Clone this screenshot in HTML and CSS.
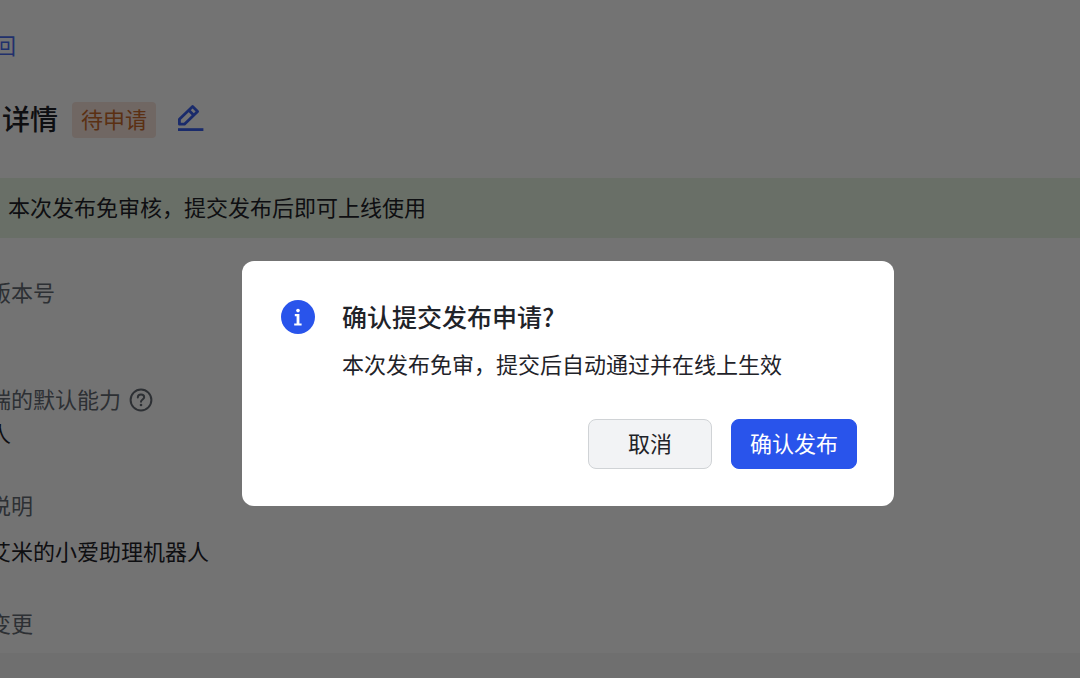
FILE: index.html
```html
<!DOCTYPE html>
<html lang="zh-CN">
<head>
    <meta charset="UTF-8">
    <meta name="viewport" content="width=device-width, initial-scale=1.0">
    <title>版本详情</title>
    <link rel="stylesheet" href="styles.css">
</head>
<body>

    <main class="page">
        <a class="back-link" href="#">回</a>

        <div class="page-header">
            <h1>详情</h1>
            <span class="tag">待申请</span>
            <button class="edit-btn" type="button" aria-label="编辑">
                <svg width="28" height="32" viewBox="0 0 28 32" fill="none" stroke="currentColor" stroke-width="2.8" stroke-linejoin="round">
                    <path d="M3.4 20.2V15.2L16.6 2.4L21.6 7.4L8.4 20.2Z"/>
                    <path d="M12.8 6.2L17.8 11.2"/>
                    <path d="M2 25.6H27.4"/>
                </svg>
            </button>
        </div>

        <div class="notice">本次发布免审核，提交发布后即可上线使用</div>

        <section class="field field-version">
            <h2>版本号</h2>
        </section>

        <section class="field field-ability">
            <h2>
                端的默认能力
                <svg class="help-icon" width="24" height="24" viewBox="0 0 24 24" fill="none" stroke="currentColor" stroke-width="2" stroke-linecap="round">
                    <circle cx="12" cy="12" r="10.4"/>
                    <path d="M8.8 9.4C8.8 7.6 10.2 6.6 12 6.6C13.8 6.6 15.2 7.6 15.2 9.3C15.2 11.4 12 11.6 12 13.8"/>
                    <circle cx="12" cy="17" r="1.3" fill="currentColor" stroke="none"/>
                </svg>
            </h2>
            <p>人</p>
        </section>

        <section class="field field-desc">
            <h2>说明</h2>
            <p>艾米的小爱助理机器人</p>
        </section>

        <section class="field field-change">
            <h2>变更</h2>
        </section>
    </main>

    <div class="overlay">
        <div class="dialog" role="dialog" aria-modal="true" aria-labelledby="dialog-title">
            <svg class="info-icon" width="34" height="34" viewBox="0 0 34 34">
                <circle cx="17" cy="17" r="17" fill="#2954eb"/>
                <circle cx="17" cy="10.6" r="1.8" fill="#fff"/>
                <path d="M13.8 14H18.4V23.4H20.6V25.6H13.2V23.4H15.6V16.2H13.8Z" fill="#fff"/>
            </svg>
            <div class="dialog-content">
                <h2 id="dialog-title">确认提交发布申请?</h2>
                <p>本次发布免审，提交后自动通过并在线上生效</p>
            </div>
            <div class="dialog-actions">
                <button class="btn" type="button">取消</button>
                <button class="btn btn-primary" type="button">确认发布</button>
            </div>
        </div>
    </div>

</body>
</html>
```
FILE: styles.css
```css
* {
    box-sizing: border-box;
}

body {
    font-family: "Noto Sans CJK SC", sans-serif;
    font-size: 22px;
    line-height: 34px;
    color: #1f2329;
    background-color: #f7f7f7;
    margin: 0;
    min-height: 100vh;
    overflow: hidden;
}

h1, h2, p {
    margin: 0;
}

button {
    font-family: inherit;
    cursor: pointer;
}

/* The page is scrolled a little to the right */
.page {
    background-color: #fff;
    margin-left: -11px;
    padding: 27px 0 14px;
}

.back-link {
    display: block;
    width: fit-content;
    margin-left: 5px;
    color: #4a6cf0;
    text-decoration: none;
}

.page-header {
    display: flex;
    align-items: center;
    margin: 41px 0 40px;
    padding-left: 13px;
}

h1 {
    padding-bottom: 4px;
    font-size: 28px;
    line-height: 32px;
    font-weight: 500;
}

.tag {
    margin-left: 14px;
    padding: 0 9px 4px;
    line-height: 32px;
    color: #c96a2c;
    background-color: #f8e4dc;
    border-radius: 4px;
}

.edit-btn {
    display: flex;
    margin-left: 20px;
    padding: 0;
    color: #3a5fee;
    background: none;
    border: none;
}

.notice {
    padding: 11px 19px 15px;
    background-color: #e9f6e4;
}

.field h2 {
    display: flex;
    align-items: center;
    gap: 8px;
    font-size: 22px;
    font-weight: 400;
    color: #646a73;
}

.help-icon {
    margin-top: 4px;
}

.field-version {
    padding-top: 36px;
}

.field-ability {
    padding-top: 73px;
}

.field-desc {
    padding-top: 38px;
}

.field-desc p {
    margin-top: 12px;
}

.field-change {
    padding-top: 38px;
}

.overlay {
    position: fixed;
    inset: 0;
    display: flex;
    align-items: center;
    justify-content: center;
    padding: 89px 0 0 56px;
    background-color: rgba(0, 0, 0, 0.55);
}

.dialog {
    display: grid;
    grid-template-columns: 34px 1fr;
    column-gap: 27px;
    width: 652px;
    max-width: 100%;
    padding: 37px 37px 37px 39px;
    background-color: #fff;
    border-radius: 12px;
}

.info-icon {
    margin-top: 2px;
}

.dialog h2 {
    font-size: 25px;
    line-height: 36px;
    font-weight: 500;
}

.dialog p {
    margin-top: 12px;
}

.dialog-actions {
    grid-column: 1 / -1;
    display: flex;
    justify-content: flex-end;
    gap: 19px;
    margin-top: 39px;
}

.btn {
    min-width: 124px;
    height: 50px;
    padding: 0 18px 4px;
    font-size: 22px;
    color: #1f2329;
    background-color: #f2f3f5;
    border: 1px solid #d0d3d6;
    border-radius: 8px;
}

.btn-primary {
    color: #fff;
    background-color: #2954eb;
    border-color: #2954eb;
}
```
